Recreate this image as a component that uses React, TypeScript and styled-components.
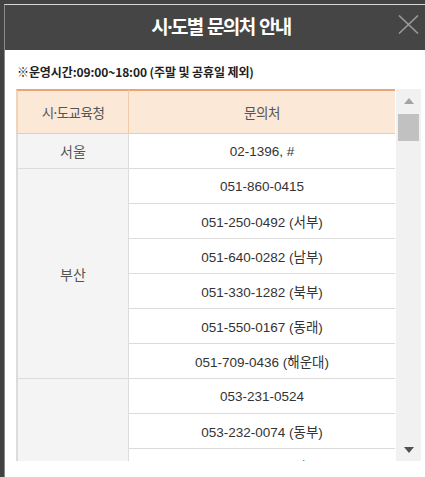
import React from "react";
import styled, { createGlobalStyle } from "styled-components";

const Global = createGlobalStyle`
  html, body { margin: 0; padding: 0; background: #424242; overflow: hidden; }
  body { width: 425px; height: 477px; font-family: "Noto Sans", "Noto Sans CJK KR", sans-serif; }
`;

const Page = styled.div`
  padding: 4px 0 0 4px;
  height: 477px;
  box-sizing: border-box;
  display: flex;
`;

const Dialog = styled.div`
  flex: 1;
  height: 473px;
  border-top: 1px solid #d6d6d6;
  border-left: 1px solid #8a8a8a;
  background: #fff;
  display: flex;
  flex-direction: column;
  overflow: hidden;
`;

const Header = styled.div`
  position: relative;
  flex: none;
  height: 45px;
  padding-left: 12px;
  background: #454545;
  display: flex;
  align-items: center;
  justify-content: center;
`;

const Title = styled.h1`
  margin: 0;
  color: #fff;
  font-family: "Noto Sans", "Noto Sans CJK KR", sans-serif;
  font-size: 19px;
  font-weight: 700;
  letter-spacing: -1.6px;
  word-spacing: 1px;
  line-height: 1;
`;

const Close = styled.button`
  position: absolute;
  right: 6px;
  top: 10px;
  width: 21px;
  height: 19px;
  padding: 0;
  border: 0;
  background: transparent;
  display: block;
`;

const Body = styled.div`
  flex: 1;
  padding: 13px 4px 0 11px;
  display: flex;
  flex-direction: column;
`;

const Notice = styled.p`
  margin: 0 0 8px 1px;
  font-family: "Noto Sans CJK KR", sans-serif;
  font-size: 12px;
  line-height: 18px;
  font-weight: 700;
  letter-spacing: -0.1px;
  color: #222;
  white-space: nowrap;
`;

const ScrollBox = styled.div`
  display: flex;
  height: 372px;
`;

const Viewport = styled.div`
  width: 380px;
  overflow: hidden;
`;

const Table = styled.table`
  width: 379px;
  table-layout: fixed;
  border-collapse: separate;
  border-spacing: 0;
`;

const Th = styled.th<{ $first?: boolean }>`
  height: 42px;
  padding: 0;
  background: #fce8d6;
  border-top: 2px solid #e9a576;
  border-bottom: 1px solid #f1caa9;
  border-left: ${(p) => (p.$first ? "2px solid #f1d3b9" : "0")};
  border-right: ${(p) => (p.$first ? "1px solid #f1caa9" : "0")};
  font-family: "Noto Sans", "Noto Sans CJK KR", sans-serif;
  font-weight: 400;
  font-size: 13.5px;
  color: #555;
  letter-spacing: -0.5px;
`;

const Region = styled.td`
  padding: 0;
  background: #f4f4f4;
  border-left: 2px solid #dcdcdc;
  border-right: 1px solid #dcdcdc;
  border-bottom: 1px solid #dcdcdc;
  text-align: center;
  font-family: "Noto Sans CJK KR", sans-serif;
  font-size: 14px;
  color: #555;
`;

const Phone = styled.td`
  height: 34px;
  padding: 0;
  border-bottom: 1px solid #dcdcdc;
  text-align: center;
  font-family: "Liberation Sans", "Noto Sans CJK KR", sans-serif;
  font-size: 13.5px;
  color: #333;
`;

const Scrollbar = styled.div`
  width: 25px;
  background: #f1f1f1;
  display: flex;
  flex-direction: column;
  align-items: center;
`;

const Arrow = styled.div<{ $down?: boolean }>`
  flex: none;
  height: 23px;
  width: 100%;
  display: flex;
  align-items: center;
  justify-content: center;
  &::before {
    content: "";
    width: 0;
    height: 0;
    border-left: 5px solid transparent;
    border-right: 5px solid transparent;
    ${(p) =>
      p.$down
        ? "border-top: 6px solid #505050;"
        : "border-bottom: 6px solid #a3a3a3;"}
  }
`;

const Thumb = styled.div`
  flex: none;
  margin-top: 2px;
  width: 21px;
  height: 27px;
  background: #c1c1c1;
`;

const Spacer = styled.div`
  flex: 1;
`;

const data: { region: string; phones: string[] }[] = [
  { region: "서울", phones: ["02-1396, #"] },
  {
    region: "부산",
    phones: [
      "051-860-0415",
      "051-250-0492 (서부)",
      "051-640-0282 (남부)",
      "051-330-1282 (북부)",
      "051-550-0167 (동래)",
      "051-709-0436 (해운대)",
    ],
  },
  {
    region: "대구",
    phones: [
      "053-231-0524",
      "053-232-0074 (동부)",
      "053-234-0150 (서부)",
      "053-235-0060 (남부)",
      "053-939-0201 (북부)",
      "053-235-0066 (달성)",
    ],
  },
];

export default function App() {
  return (
    <>
      <Global />
      <Page>
        <Dialog>
          <Header>
            <Title>시·도별 문의처 안내</Title>
            <Close aria-label="닫기">
              <svg width="21" height="19" viewBox="0 0 21 19">
                <path d="M1 0.5 L20 18.5 M20 0.5 L1 18.5" stroke="#9a9a9a" strokeWidth="1.6" fill="none" />
              </svg>
            </Close>
          </Header>
          <Body>
            <Notice>※운영시간:09:00~18:00 (주말 및 공휴일 제외)</Notice>
            <ScrollBox>
              <Viewport>
                <Table>
                  <colgroup>
                    <col style={{ width: 113 }} />
                    <col />
                  </colgroup>
                  <thead>
                    <tr>
                      <Th $first>시·도교육청</Th>
                      <Th>문의처</Th>
                    </tr>
                  </thead>
                  <tbody>
                    {data.map((g) =>
                      g.phones.map((p, i) => (
                        <tr key={g.region + i}>
                          {i === 0 && <Region rowSpan={g.phones.length}>{g.region}</Region>}
                          <Phone>{p}</Phone>
                        </tr>
                      ))
                    )}
                  </tbody>
                </Table>
              </Viewport>
              <Scrollbar>
                <Arrow />
                <Thumb />
                <Spacer />
                <Arrow $down />
              </Scrollbar>
            </ScrollBox>
          </Body>
        </Dialog>
      </Page>
    </>
  );
}
